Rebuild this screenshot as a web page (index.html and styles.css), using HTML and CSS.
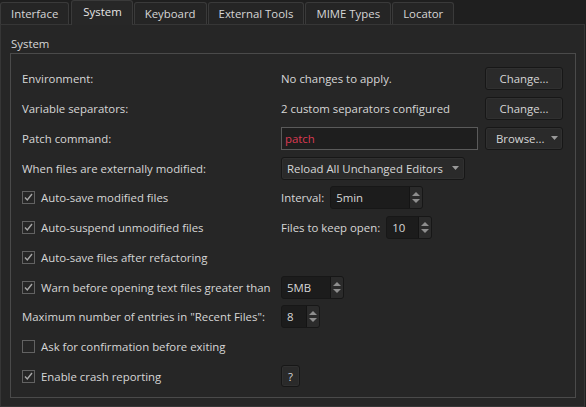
FILE: index.html
```html
<!DOCTYPE html>
<html>
<head>
<meta charset="utf-8">
<link rel="stylesheet" href="styles.css">
</head>
<body>
<div class="window">
  <div class="tabbar">
    <div class="tab">Interface</div>
    <div class="tab active">System</div>
    <div class="tab">Keyboard</div>
    <div class="tab">External Tools</div>
    <div class="tab">MIME Types</div>
    <div class="tab">Locator</div>
  </div>
  <div class="pane">
    <div class="group-title">System</div>
    <div class="group-box">
      <div class="label">Environment:</div>
      <div class="field split"><span>No changes to apply.</span><button class="btn wide">Change...</button></div>

      <div class="label">Variable separators:</div>
      <div class="field split"><span>2 custom separators configured</span><button class="btn wide">Change...</button></div>

      <div class="label">Patch command:</div>
      <div class="field split"><div class="lineedit">patch</div><button class="btn wide menu">Browse...<svg class="caret" width="7" height="4" viewBox="0 0 7 4"><path d="M0 0H7L3.5 4Z" fill="#9a9a9a"/></svg></button></div>

      <div class="label">When files are externally modified:</div>
      <div class="field"><div class="combo">Reload All Unchanged Editors<svg class="caret" width="7" height="4" viewBox="0 0 7 4"><path d="M0 0H7L3.5 4Z" fill="#9a9a9a"/></svg></div></div>

      <div class="check on">Auto-save modified files</div>
      <div class="field inline"><span>Interval:</span><div class="spin w-interval"><span class="val">5min</span><span class="arrows"><i class="up"></i><i class="down"></i></span></div></div>

      <div class="check on">Auto-suspend unmodified files</div>
      <div class="field inline"><span>Files to keep open:</span><div class="spin w-keep"><span class="val">10</span><span class="arrows"><i class="up"></i><i class="down"></i></span></div></div>

      <div class="check on">Auto-save files after refactoring</div>
      <div class="field"></div>

      <div class="check on">Warn before opening text files greater than</div>
      <div class="field"><div class="spin w-mb"><span class="val">5MB</span><span class="arrows"><i class="up"></i><i class="down"></i></span></div></div>

      <div class="label">Maximum number of entries in "Recent Files":</div>
      <div class="field"><div class="spin w-recent"><span class="val">8</span><span class="arrows"><i class="up"></i><i class="down"></i></span></div></div>

      <div class="check">Ask for confirmation before exiting</div>
      <div class="field"></div>

      <div class="check on">Enable crash reporting</div>
      <div class="field"><button class="btn help">?</button></div>
    </div>
  </div>
</div>
</body>
</html>
```
FILE: styles.css
```css
html, body {
  margin: 0;
  padding: 0;
  background: #1f1f1f;
}
body {
  font-family: "Open Sans", "Noto Sans", sans-serif;
  font-size: 11.4px;
  color: #d6d6d6;
  width: 586px;
  height: 407px;
  overflow: hidden;
  white-space: nowrap;
}
.window {
  display: flex;
  flex-direction: column;
  height: 407px;
}
.tabbar {
  display: flex;
  gap: 1px;
  height: 24px;
  align-items: flex-end;
  position: relative;
  z-index: 1;
}
.tab {
  height: 22px;
  box-sizing: border-box;
  border: 1px solid #3a3a3a;
  border-bottom: none;
  border-radius: 3px 3px 0 0;
  background: #252525;
  padding: 0 10px;
  display: flex;
  align-items: center;
  color: #d6d6d6;
}
.tab.active {
  height: 25px;
  margin-bottom: -1px;
  margin-left: 1px;
  background: #272727;
  padding-bottom: 3px;
  padding-left: 11px;
  padding-right: 10px;
  color: #e6e6e6;
}
.pane {
  flex: none;
  width: 585px;
  height: 383px;
  box-sizing: border-box;
  background: #262626;
  border: 1px solid #363636;
  padding: 10px 8px 8px 9px;
  display: flex;
  flex-direction: column;
}
.group-title {
  line-height: 17px;
  height: 18px;
  padding-left: 1px;
}
.group-box {
  flex: 1;
  border: 1px solid #4a4a4a;
  padding: 10px 12px 3px 11px;
  display: grid;
  grid-template-columns: 259px 1fr;
  grid-auto-rows: 29.75px;
  align-items: center;
}
.check {
  display: flex;
  align-items: center;
  gap: 6px;
}
.check::before {
  content: "";
  width: 13px;
  height: 13px;
  box-sizing: border-box;
  border: 1px solid #626262;
  background: #262626;
  flex: none;
}
.check.on::before {
  background: #262626 url("data:image/svg+xml;utf8,<svg xmlns='http://www.w3.org/2000/svg' width='11' height='11' viewBox='0 0 11 11'><path d='M2 5.5 L4.3 8 L9 2' fill='none' stroke='%23a8a8a8' stroke-width='1.4'/></svg>") center/11px 11px no-repeat;
}
.field {
  display: flex;
  align-items: center;
  min-width: 0;
}
.field.split {
  justify-content: space-between;
  gap: 7px;
}
.field.inline {
  gap: 6px;
}
.btn {
  font: inherit;
  color: #d6d6d6;
  background: #2a2a2a;
  border: 1px solid #171717;
  border-radius: 3px;
  height: 23px;
  padding: 0;
  display: flex;
  align-items: center;
  justify-content: center;
  box-shadow: inset 0 0 0 1px #303030;
}
.btn.wide {
  width: 78px;
  flex: none;
}
.btn.menu {
  justify-content: flex-start;
  padding-left: 10px;
  gap: 6px;
}
.btn.help {
  width: 19px;
  height: 22px;
}
.lineedit {
  flex: 1;
  height: 23px;
  box-sizing: border-box;
  border: 1px solid #5a5a5a;
  background: #1e1e1e;
  color: #dc3a52;
  display: flex;
  align-items: center;
  padding-left: 3px;
}
.combo {
  width: 184px;
  height: 23px;
  box-sizing: border-box;
  border: 1px solid #171717;
  border-radius: 3px;
  background: #2a2a2a;
  box-shadow: inset 0 0 0 1px #303030;
  display: flex;
  align-items: center;
  padding-left: 5px;
  gap: 9px;
}
.caret { flex: none; }
.spin {
  height: 23px;
  box-sizing: border-box;
  border: 1px solid #171717;
  border-radius: 3px;
  background: #1c1c1c;
  display: flex;
  overflow: hidden;
}
.spin .val {
  flex: 1;
  display: flex;
  align-items: center;
  padding-left: 5px;
}
.spin .arrows {
  width: 12px;
  flex: none;
  background: #2b2b2b;
  border-left: 1px solid #141414;
  display: flex;
  flex-direction: column;
  align-items: center;
  justify-content: center;
  gap: 3px;
}
.spin .arrows i {
  width: 0;
  height: 0;
  border-left: 4px solid transparent;
  border-right: 4px solid transparent;
}
.spin .arrows .up { border-bottom: 4px solid #8e8e8e; }
.spin .arrows .down { border-top: 4px solid #8e8e8e; }
.w-interval { width: 93px; }
.w-keep { width: 46px; }
.w-mb { width: 63px; }
.w-recent { width: 39px; }
```
